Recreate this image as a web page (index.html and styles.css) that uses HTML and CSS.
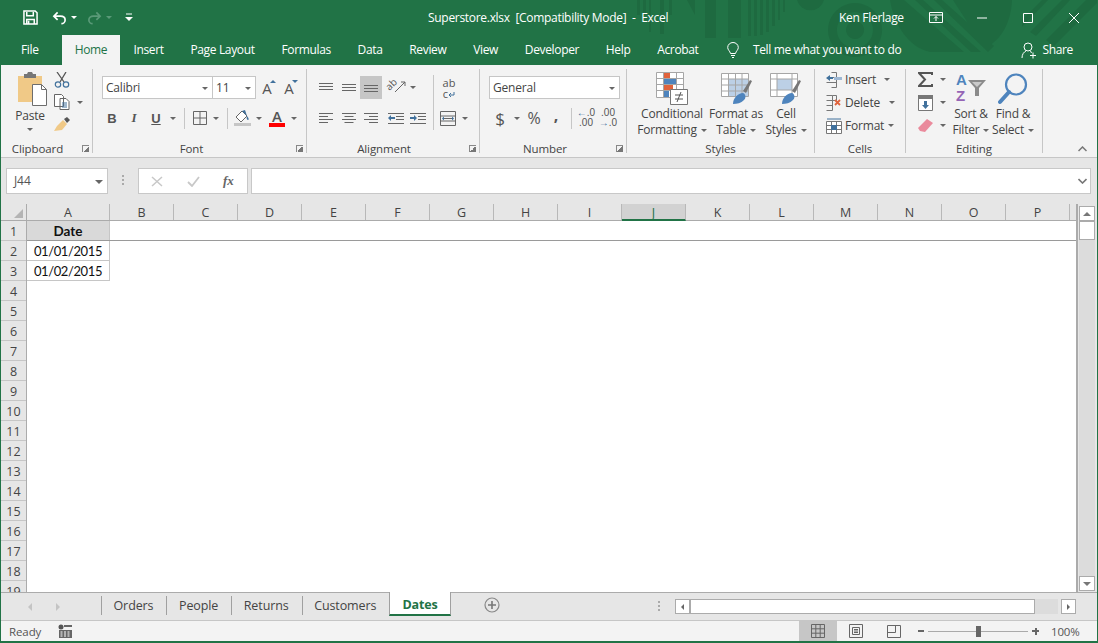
FILE: index.html
```html
<!DOCTYPE html>
<html lang="en">
<head>
    <meta charset="UTF-8">
    <title>Superstore.xlsx - Excel</title>
    <link rel="stylesheet" href="styles.css">
</head>
<body>
<div class="window">

    <svg class="pattern" width="468" height="65" viewBox="630 0 468 65">
        <path d="M637 0h3v15h-3zM643 0h3v15h-3zM649 0h2v32h-2zM660 0h4v34h-4zM669 0h3v15h-3z"/>
        <path d="M687 0h8v15zM705 0h11v38h-11zM728 0h13v38h-13z"/>
        <path d="M748 0h3v36h-3zM754 0h3v36h-3zM760 0h3v35h-3zM766 0h3v32h-3zM772 0h3v26h-3zM778 0h2v20h-2zM783 0h2v12h-2z"/>
        <path d="M797 0h27a14 14 0 0 1-27 0z"/>
        <path fill-rule="evenodd" d="M855 3a27 27 0 1 0 .1 0zM855 12a18 18 0 1 1-.1 0zM855 21a9 9 0 1 0 .1 0z"/>
        <path d="M890 0h14l60 52h-34c-22-5-36-28-40-52zM915 0h8l58 52h-10zM934 0h8l52 46-6 6zM953 0h59c-1 24-12 42-28 48z"/>
        <path d="M1022 20l20-20h6l-26 27zM1030 32l32-32h8l-34 36zM1046 40l40-40h12v2l-44 44z"/>
    </svg>

    <header class="titlebar">
        <div class="qat">
            <svg class="qat-save" width="15" height="15" viewBox="0 0 16 16"><path d="M1 1h12l2 2v12H1zM4 2v4h7V2M4 15v-5h8v5M6 11.500v3" fill="none" stroke="#fff" stroke-width="1.600"/></svg>
            <svg class="qat-undo" width="15" height="14" viewBox="0 0 16 14"><path d="M6 1L2 5l4 4M2 5h7c3 0 5 1.500 5 4s-2 4-4 4" fill="none" stroke="#fff" stroke-width="1.800"/></svg>
            <i class="caret white"></i>
            <svg class="qat-redo" width="15" height="14" viewBox="0 0 16 14"><path d="M10 1l4 4-4 4M14 5H7C4 5 2 6.500 2 9s2 4 4 4" fill="none" stroke="#5a9a78" stroke-width="1.800"/></svg>
            <i class="caret dim"></i>
            <svg class="qat-more" width="8" height="9" viewBox="0 0 8 9"><path d="M1 1h6" stroke="#fff"/><path d="M0 4h8L4 8z" fill="#fff"/></svg>
        </div>
        <div class="doc-title">Superstore.xlsx&nbsp; [Compatibility Mode]&nbsp; -&nbsp; Excel</div>
        <div class="user">Ken Flerlage</div>
        <div class="win-btns">
            <svg width="14" height="11" viewBox="0 0 14 11"><path d="M.5.500h13v10H.5zM1 3h12M7 9V4.500M5 6.500l2-2 2 2" fill="none" stroke="#fff"/></svg>
            <svg class="win-min" width="10" height="10" viewBox="0 0 10 10"><path d="M0 5h10" stroke="#fff"/></svg>
            <svg class="win-max" width="10" height="10" viewBox="0 0 10 10"><path d="M.5.500h9v9h-9z" fill="none" stroke="#fff"/></svg>
            <svg class="win-close" width="10" height="10" viewBox="0 0 10 10"><path d="M0 0l10 10M10 0L0 10" stroke="#fff"/></svg>
        </div>
    </header>

    <nav class="tabs">
        <span class="tab">File</span>
        <span class="tab active">Home</span>
        <span class="tab">Insert</span>
        <span class="tab">Page Layout</span>
        <span class="tab">Formulas</span>
        <span class="tab">Data</span>
        <span class="tab">Review</span>
        <span class="tab">View</span>
        <span class="tab">Developer</span>
        <span class="tab">Help</span>
        <span class="tab">Acrobat</span>
        <svg class="bulb" width="12" height="16" viewBox="0 0 12 16"><path d="M3.500 11.500C3 9 .7 8 .7 5.500a5.300 5 0 0 1 10.600 0c0 2.500-2.300 3.500-2.800 6zM4 13.500h4M5 15.500h2" fill="none" stroke="#fff"/></svg>
        <span class="tell">Tell me what you want to do</span>
        <span class="share">
            <svg width="16" height="17" viewBox="0 0 16 17"><circle cx="7" cy="5" r="4" fill="none" stroke="#fff"/><path d="M1 16c0-4 2-6 4-7M9 9.500l2 1M9 13.500h6M12 10.500v6" fill="none" stroke="#fff"/></svg>
            Share
        </span>
    </nav>

    <section class="ribbon">
        <!-- Clipboard -->
        <div class="group g-clipboard">
            <div class="group-body">
                <div class="big-btn paste">
                    <svg width="30" height="34" viewBox="0 0 30 34">
                        <path d="M1 4h24v26H1z" fill="#f0c987"/>
                        <path d="M7 4V2h3l1-2h4l1 2h3v4H7z" fill="#767676"/>
                        <path d="M15.500 12.500h9l5 5v16h-14z" fill="#fff" stroke="#6d6d6d"/>
                        <path d="M24.500 12.500v5h5" fill="none" stroke="#6d6d6d"/>
                    </svg>
                    <span class="big-text">Paste</span>
                    <i class="caret"></i>
                </div>
                <div class="clip-tools">
                    <div class="tool">
                        <svg width="16" height="16" viewBox="0 0 16 16"><path d="M3 0l7 10M12 0L6 10" stroke="#555" stroke-width="1.300" fill="none"/><circle cx="4" cy="12.500" r="2.700" fill="none" stroke="#41719c" stroke-width="1.200"/><circle cx="12" cy="12.500" r="2.700" fill="none" stroke="#41719c" stroke-width="1.200"/></svg>
                    </div>
                    <div class="tool">
                        <svg width="16" height="16" viewBox="0 0 16 16"><path d="M.5.500h7l2 2v10H.5zM6 4.500h6l3 3v8H6z" fill="#fff" stroke="#666"/><path d="M8 9h5M8 11h5M8 13h5" stroke="#41719c"/></svg>
                        <i class="caret copy-caret"></i>
                    </div>
                    <div class="tool">
                        <svg width="16" height="15" viewBox="0 0 16 15"><path d="M10 2l3-2 3 3-3 3z" fill="#555"/><path d="M9 3l4 4-5 6-8 1 3-5z" fill="#f0c987"/></svg>
                    </div>
                </div>
            </div>
            <div class="group-label">Clipboard<i class="launcher"></i></div>
        </div>

        <!-- Font -->
        <div class="group g-font">
            <div class="group-body col">
                <div class="row row-top">
                    <div class="combo combo-font">Calibri<i class="caret"></i></div>
                    <div class="combo combo-size">11<i class="caret"></i></div>
                    <span class="tool grow-a">A<i class="tiny-up"></i></span>
                    <span class="tool shrink-a">A<i class="tiny-down"></i></span>
                </div>
                <div class="row row-bottom">
                    <span class="tool fmt bold">B</span>
                    <span class="tool fmt ital">I</span>
                    <span class="tool fmt under">U</span>
                    <i class="caret slot"></i>
                    <span class="vsep"></span>
                    <span class="tool w20">
                        <svg width="14" height="14" viewBox="0 0 14 14"><path d="M.5.500h13v13H.5zM7 .5v13M.5 7h13" fill="none" stroke="#666"/></svg>
                    </span>
                    <i class="caret slot"></i>
                    <span class="vsep"></span>
                    <span class="tool w20 fill-tool">
                        <svg width="18" height="16" viewBox="0 0 18 16"><path d="M8 1L2 7l5 5 6-6z" fill="#fff" stroke="#666"/><path d="M8 1l3-1 2 6z" fill="#41719c"/><path d="M13 6c2 2 2 4 1 4s-2-2-1-4z" fill="#41719c"/><path d="M0 13h17v3H0z" fill="#c6c6c6"/></svg>
                    </span>
                    <i class="caret slot"></i>
                    <span class="tool color-a">A<b></b></span>
                    <i class="caret slot"></i>
                </div>
            </div>
            <div class="group-label">Font<i class="launcher"></i></div>
        </div>

        <!-- Alignment -->
        <div class="group g-align">
            <div class="group-body">
                <div class="col align-main">
                    <div class="row row-top">
                        <span class="tool"><svg width="14" height="9" viewBox="0 0 14 9"><path d="M0 .5h14M0 3.500h14M0 6.500h14" stroke="#666"/></svg></span>
                        <span class="tool mid"><svg width="14" height="9" viewBox="0 0 14 9"><path d="M0 1.500h14M0 4.500h14M0 7.500h14" stroke="#666"/></svg></span>
                        <span class="tool on"><svg width="14" height="9" viewBox="0 0 14 9"><path d="M0 2.500h14M0 5.500h14M0 8.500h14" stroke="#666"/></svg></span>
                        <span class="tool orient"><span class="orient-ab">ab</span><svg width="12" height="12" viewBox="0 0 12 12"><path d="M1 11L11 1M7 1h4v4" fill="none" stroke="#666"/></svg></span>
                        <i class="caret slot"></i>
                    </div>
                    <div class="row row-bottom">
                        <span class="tool"><svg width="14" height="10" viewBox="0 0 14 10"><path d="M0 .5h14M0 3.500h9M0 6.500h14M0 9.500h9" stroke="#666"/></svg></span>
                        <span class="tool mid"><svg width="14" height="10" viewBox="0 0 14 10"><path d="M0 .5h14M2.500 3.500h9M0 6.500h14M2.500 9.500h9" stroke="#666"/></svg></span>
                        <span class="tool"><svg width="14" height="10" viewBox="0 0 14 10"><path d="M0 .5h14M5 3.500h9M0 6.500h14M5 9.500h9" stroke="#666"/></svg></span>
                        <span class="tool indent-first"><svg width="16" height="11" viewBox="0 0 16 11"><path d="M0 .5h16M8 3.500h8M8 6.500h8M0 10.500h16" stroke="#666"/><path d="M0 5l3-3v2h4v2H3v2z" fill="#41719c"/></svg></span>
                        <span class="tool"><svg width="16" height="11" viewBox="0 0 16 11"><path d="M0 .5h16M8 3.500h8M8 6.500h8M0 10.500h16" stroke="#666"/><path d="M7 5L4 2v2H0v2h4v2z" fill="#41719c"/></svg></span>
                    </div>
                </div>
                <span class="vsep tall"></span>
                <div class="col">
                    <div class="row row-top">
                        <span class="tool wrap-text">ab<br>c<svg width="7" height="6" viewBox="0 0 7 6"><path d="M6 0v3H1M3 1L1 3l2 2" fill="none" stroke="#41719c"/></svg></span>
                    </div>
                    <div class="row row-bottom">
                        <span class="tool"><svg width="16" height="15" viewBox="0 0 16 15"><path d="M.5.500h15v14H.5zM.5 5h15M.5 10h15M3 7.500h10" fill="none" stroke="#666"/><path d="M2 7.500l2-2v4zM14 7.500l-2-2v4z" fill="#41719c"/></svg></span>
                        <i class="caret slot tight"></i>
                    </div>
                </div>
            </div>
            <div class="group-label">Alignment<i class="launcher"></i></div>
        </div>

        <!-- Number -->
        <div class="group g-number">
            <div class="group-body col">
                <div class="row row-top">
                    <div class="combo combo-num">General<i class="caret"></i></div>
                </div>
                <div class="row row-bottom">
                    <span class="tool sym dollar">$</span>
                    <i class="caret slot"></i>
                    <span class="tool sym">%</span>
                    <span class="tool sym comma">,</span>
                    <span class="vsep num-sep"></span>
                    <span class="tool dec"><em>←</em>.0<br>.00</span>
                    <span class="tool dec">.00<br><em>→</em>.0</span>
                </div>
            </div>
            <div class="group-label">Number<i class="launcher"></i></div>
        </div>

        <!-- Styles -->
        <div class="group g-styles">
            <div class="group-body">
                <div class="big-btn cond">
                    <svg width="32" height="33" viewBox="0 0 32 33">
                        <path d="M.5.500h27v25H.5zM.5 6.500h27M.5 12.500h27M.5 18.500h27M7.500.5v25M20.500.5v25" fill="#fff" stroke="#a6a6a6"/>
                        <path d="M8 1h6v5H8z" fill="#e0633c"/><path d="M8 7h12v5H8z" fill="#4e84bd"/><path d="M8 13h9v5H8z" fill="#e0633c"/><path d="M8 19h5v6H8z" fill="#4e84bd"/>
                        <path d="M14.500 17.500h17v15h-17z" fill="#fff" stroke="#777"/>
                        <path d="M19 23h8M19 27h8M25 20l-4 10" stroke="#555" fill="none"/>
                    </svg>
                    <span class="big-text">Conditional<br>Formatting<i class="caret inline"></i></span>
                </div>
                <div class="big-btn table">
                    <svg width="32" height="33" viewBox="0 0 32 33">
                        <path d="M.5 1.500h27v23H.5z" fill="#fff" stroke="#a6a6a6"/>
                        <path d="M7 7h20v17H7z" fill="#bcd0e6"/>
                        <path d="M.5 7h27M.5 13h27M.5 19h27M7.500 1.500v23M14.500 1.500v23M21 1.500v23" stroke="#a6a6a6" fill="none"/>
                        <path d="M22 19l7-11 2 1-6 12z" fill="#777"/>
                        <path d="M12 32c0-6 5-11 10-11 3 1 3 5 1 7-3 3-7 4-11 4z" fill="#4e84bd"/>
                    </svg>
                    <span class="big-text">Format as<br>Table<i class="caret inline"></i></span>
                </div>
                <div class="big-btn cellst">
                    <svg width="32" height="33" viewBox="0 0 32 33">
                        <path d="M.5 1.500h27v23H.5z" fill="#fff" stroke="#a6a6a6"/>
                        <path d="M7 7h15v11H7z" fill="#bcd0e6"/>
                        <path d="M.5 7h27M.5 18h27M7 1.500v23M22 1.500v23" stroke="#a6a6a6" fill="none"/>
                        <path d="M22 19l7-11 2 1-6 12z" fill="#777"/>
                        <path d="M12 32c0-6 5-11 10-11 3 1 3 5 1 7-3 3-7 4-11 4z" fill="#4e84bd"/>
                    </svg>
                    <span class="big-text">Cell<br>Styles<i class="caret inline"></i></span>
                </div>
            </div>
            <div class="group-label">Styles</div>
        </div>

        <!-- Cells -->
        <div class="group g-cells">
            <div class="group-body col">
                <div class="cell-row">
                    <svg width="16" height="16" viewBox="0 0 16 16"><path d="M5.500.5h5v15h-5M.5 10.500h10M5.500 5.500h5" fill="none" stroke="#777"/><path d="M0 6l4-3v2h3v2H4v2z" fill="#41719c"/><path d="M8 5h8v3H8z" fill="#9db7d3"/></svg>
                    <span>Insert</span><i class="caret c-insert"></i>
                </div>
                <div class="cell-row">
                    <svg width="16" height="16" viewBox="0 0 16 16"><path d="M.5.500h6v15h-6M.5 5.500h10M.5 10.500h6M6.500.5h4v5" fill="none" stroke="#777"/><path d="M9 5l5 5M14 5l-5 5" stroke="#e0633c" stroke-width="1.800"/></svg>
                    <span>Delete</span><i class="caret c-delete"></i>
                </div>
                <div class="cell-row">
                    <svg width="16" height="16" viewBox="0 0 16 16"><path d="M.5 3.500h15v12H.5zM.5 7.500h15M.5 11.500h15M5.500 3.500v12M10.500 3.500v12" fill="#fff" stroke="#777"/><path d="M5 7h6v5H5z" fill="#41719c"/><path d="M1 1h14" stroke="#41719c"/></svg>
                    <span>Format</span><i class="caret c-format"></i>
                </div>
            </div>
            <div class="group-label">Cells</div>
        </div>

        <!-- Editing -->
        <div class="group g-editing">
            <div class="group-body">
                <div class="col edit-tools">
                    <div class="edit-row">
                        <svg width="15" height="15" viewBox="0 0 15 15"><path d="M14 3V1H1l6 6.500L1 14h13v-2" fill="none" stroke="#555" stroke-width="2"/></svg>
                        <i class="caret"></i>
                    </div>
                    <div class="edit-row">
                        <svg width="15" height="16" viewBox="0 0 15 16"><path d="M.5.500h14v15H.5z" fill="#fff" stroke="#777"/><path d="M0 0h15v4H0z" fill="#777"/><path d="M6 6h3v4h2l-3.500 4L4 10h2z" fill="#41719c"/></svg>
                        <i class="caret"></i>
                    </div>
                    <div class="edit-row">
                        <svg width="15" height="13" viewBox="0 0 15 13"><path d="M9 0l6 4-8 9-5-1-2-3z" fill="#ea8a9c"/></svg>
                        <i class="caret"></i>
                    </div>
                </div>
                <div class="big-btn sort">
                    <div class="sort-icon">
                        <span class="az"><em>A</em><b>Z</b></span>
                        <svg width="18" height="16" viewBox="0 0 18 16"><path d="M0 0h18l-7 8v8H7V8z" fill="#8a8a8a"/><path d="M4 2h10l-5 5z" fill="#c9c9c9"/></svg>
                    </div>
                    <span class="big-text">Sort &amp;<br>Filter<i class="caret inline"></i></span>
                </div>
                <div class="big-btn find">
                    <svg width="30" height="32" viewBox="0 0 30 32"><circle cx="18" cy="11.500" r="10" fill="none" stroke="#4e84bd" stroke-width="2.200"/><path d="M11 19L2 29" stroke="#4e84bd" stroke-width="4" stroke-linecap="round"/></svg>
                    <span class="big-text">Find &amp;<br>Select<i class="caret inline"></i></span>
                </div>
            </div>
            <div class="group-label">Editing</div>
        </div>

        <svg class="collapse" width="9" height="6" viewBox="0 0 9 6"><path d="M.5 5l4-4 4 4" fill="none" stroke="#777" stroke-width="1.500"/></svg>
    </section>

    <section class="formula-area">
        <div class="name-box">J44<i class="caret"></i></div>
        <span class="dots"></span>
        <div class="fx-box">
            <svg width="12" height="11" viewBox="0 0 12 11"><path d="M1 1l10 9M11 1L1 10" stroke="#c8c8c8" stroke-width="1.500"/></svg>
            <svg class="fx-check" width="13" height="11" viewBox="0 0 13 11"><path d="M1 6l4 4 7-9" fill="none" stroke="#c8c8c8" stroke-width="1.800"/></svg>
            <span class="fx-label">fx</span>
        </div>
        <div class="formula-input">
            <svg width="9" height="6" viewBox="0 0 9 6"><path d="M.5 1l4 4 4-4" fill="none" stroke="#777" stroke-width="1.600"/></svg>
        </div>
    </section>

    <section class="sheet-wrap">
        <div class="sheet">
            <div class="col-heads">
                <div class="corner"><i></i></div>
                <div class="col-head col-a">A</div>
                <div class="col-head">B</div>
                <div class="col-head">C</div>
                <div class="col-head">D</div>
                <div class="col-head">E</div>
                <div class="col-head">F</div>
                <div class="col-head">G</div>
                <div class="col-head">H</div>
                <div class="col-head">I</div>
                <div class="col-head selected">J</div>
                <div class="col-head">K</div>
                <div class="col-head">L</div>
                <div class="col-head">M</div>
                <div class="col-head">N</div>
                <div class="col-head">O</div>
                <div class="col-head">P</div>
            </div>
            <div class="grid-body">
                <div class="row-heads">
                    <div>1</div><div>2</div><div>3</div><div>4</div><div>5</div>
                    <div>6</div><div>7</div><div>8</div><div>9</div><div>10</div>
                    <div>11</div><div>12</div><div>13</div><div>14</div><div>15</div>
                    <div>16</div><div>17</div><div>18</div><div>19</div>
                </div>
                <div class="cells">
                    <div class="frozen-row">
                        <div class="cell head-cell">Date</div>
                    </div>
                    <div class="cell data-cell">01/01/2015</div>
                    <div class="cell data-cell">01/02/2015</div>
                </div>
            </div>
        </div>
        <div class="vscroll">
            <div class="sb-btn"><i class="arrow-up"></i></div>
            <div class="sb-thumb"></div>
            <div class="sb-track"></div>
            <div class="sb-btn"><i class="arrow-down"></i></div>
        </div>
    </section>

    <section class="sheet-tabs">
        <div class="tab-nav"><i class="arrow-left"></i><i class="arrow-right"></i></div>
        <div class="sheet-tab">Orders</div>
        <div class="sheet-tab">People</div>
        <div class="sheet-tab">Returns</div>
        <div class="sheet-tab">Customers</div>
        <div class="sheet-tab current">Dates</div>
        <svg class="add-sheet" width="16" height="16" viewBox="0 0 16 16"><circle cx="8" cy="8" r="7" fill="none" stroke="#888" stroke-width="1.200"/><path d="M8 4v8M4 8h8" stroke="#777" stroke-width="1.600"/></svg>
        <span class="dots tab-dots"></span>
        <div class="hscroll">
            <div class="hs-btn"><i class="arrow-left dark"></i></div>
            <div class="hs-thumb"></div>
            <div class="hs-track"></div>
            <div class="hs-btn"><i class="arrow-right dark"></i></div>
        </div>
    </section>

    <footer class="status">
        <span class="ready">Ready</span>
        <svg class="macro" width="14" height="14" viewBox="0 0 14 14"><circle cx="3" cy="3" r="2.500" fill="#555"/><path d="M6 1h8v2H6zM1 6h13v8H1z" fill="#666"/><path d="M2.500 8h2M6 8h2M9.500 8h2M2.500 10h2M6 10h2M9.500 10h2M2.500 12h2M6 12h2M9.500 12h2" stroke="#fff"/></svg>
        <div class="view-btn on">
            <svg width="14" height="14" viewBox="0 0 14 14"><path d="M.5.500h13v13H.5zM.5 4.800h13M.5 9.200h13M4.800.5v13M9.200.5v13" fill="none" stroke="#666"/></svg>
        </div>
        <div class="view-btn">
            <svg width="14" height="14" viewBox="0 0 14 14"><path d="M.5.500h13v13H.5zM3.500 3.500h7v7h-7zM5 5.500h4M5 7h4M5 8.500h4" fill="none" stroke="#666"/></svg>
        </div>
        <div class="view-btn">
            <svg width="14" height="13" viewBox="0 0 14 13"><path d="M.5.500h13v12H.5zM.5 7.500h8v-7" fill="none" stroke="#666"/></svg>
        </div>
        <span class="zoom-minus"></span>
        <div class="slider"><i></i></div>
        <span class="zoom-plus"></span>
        <span class="zoom-val">100%</span>
    </footer>
</div>
</body>
</html>
```

FILE: styles.css
```css
* { box-sizing: border-box; }
html, body { margin: 0; padding: 0; }
body { font-family: "Open Sans", "Noto Sans", sans-serif; font-size: 12px; color: #444; overflow: hidden; }
i, em { font-style: normal; }

.window {
    position: relative; width: 1098px; height: 643px; display: flex; flex-direction: column;
    background: #e6e6e6; border: 1px solid #217346; border-top: 0; border-bottom-width: 2px; overflow: hidden;
}
.window::before { content: ""; position: absolute; left: 0; top: 0; width: 100%; height: 65px; background: #217346; }

/* decoration behind the title bar */
.pattern { position: absolute; left: 629px; top: 0; z-index: 0; fill: #1e6a40; }

.caret { display: inline-block; width: 0; height: 0; border: 3px solid transparent; border-top: 3px solid #666; border-bottom: 0; }
.caret.white { border-top-color: #fff; }
.caret.dim { border-top-color: #5a9a78; }
.caret.slot { margin: 0 3px; width: 6px; }
.caret.slot.tight { margin-left: 3px; }
.caret.inline { margin-left: 4px; vertical-align: 2px; }

/* title bar */
.titlebar { position: relative; height: 35px; flex: none; display: flex; align-items: center; color: #fff; z-index: 1; }
.qat { width: 427px; display: flex; align-items: center; padding-left: 22px; }
.qat-undo { margin-left: 14px; }
.qat .caret { margin-left: 4px; }
.qat-redo { margin-left: 10px; }
.qat-more { margin-left: 13px; }
.doc-title { width: 411px; font-size: 12px; letter-spacing: -0.3px; white-space: nowrap; }
.user { width: 90px; white-space: nowrap; letter-spacing: -0.3px; }
.win-btns { display: flex; align-items: center; }
.win-min { margin-left: 34px; }
.win-max { margin-left: 36px; }
.win-close { margin-left: 36px; }

/* ribbon tabs */
.tabs { position: relative; z-index: 1; height: 30px; flex: none; display: flex; align-items: center; color: #fff; letter-spacing: -0.35px; }
.tab { height: 30px; line-height: 29px; padding: 0 13.400px; white-space: nowrap; }
.tab:first-child { width: 61px; padding: 0 0 0 20px; }
.tab.active { width: 58px; padding: 0; text-align: center; background: #f3f3f3; color: #217346; }
.bulb { margin-left: 15px; flex: none; }
.tell { margin-left: 14px; line-height: 28px; white-space: nowrap; }
.share { margin-left: auto; margin-right: 24px; display: flex; align-items: center; gap: 5px; line-height: 28px; }

/* ribbon */
.ribbon { position: relative; height: 93px; flex: none; display: flex; background: #f3f3f3; padding: 4px 0 0; border-bottom: 1px solid #c6c6c6; color: #444; }
.group { position: relative; display: flex; flex-direction: column; height: 84px; border-right: 1px solid #c6c6c6; flex: none; }
.group-body { display: flex; flex: none; height: 73px; }
.group-label { position: relative; height: 11px; line-height: 14px; text-align: center; font-size: 11.500px; letter-spacing: -0.1px; color: #444; }
.launcher { position: absolute; right: 3px; top: 3px; width: 7px; height: 7px; border-left: 1px solid #888; border-top: 1px solid #888; background: linear-gradient(135deg, transparent 50%, #777 50%); }
.g-clipboard .group-label { padding-right: 18px; }
.g-font .group-label { padding-right: 16px; }
.g-align .group-label { padding-right: 18px; }
.g-number .group-label { padding-right: 16px; }
.col { display: flex; flex-direction: column; }
.row { display: flex; align-items: center; }
.row-top { height: 23px; margin-top: 7px; }
.row-bottom { height: 22px; margin-top: 8px; }

.g-clipboard { width: 92px; }
.g-font { width: 214px; }
.g-align { width: 173px; }
.g-number { width: 147px; }
.g-styles { width: 188px; }
.g-cells { width: 91px; }
.g-editing { width: 137px; }

.tool { width: 22px; height: 22px; display: inline-flex; align-items: center; justify-content: center; flex: none; position: relative; }
.tool.w20 { width: 20px; }
.big-btn { display: flex; flex-direction: column; align-items: center; flex: none; }
.big-text { line-height: 16px; text-align: center; white-space: nowrap; letter-spacing: -0.2px; }

.paste { width: 42px; margin-left: 8px; padding-top: 3px; }
.paste svg { margin-left: 3px; }
.paste .big-text { margin-top: 2px; }
.paste .caret { margin-top: 4px; }
.clip-tools { margin: -1px 0 0 0; display: flex; flex-direction: column; }
.clip-tools .tool { width: 22px; height: 22px; position: relative; margin-top: 0.500px; }
.copy-caret { position: absolute; left: 26px; top: 10px; }

.combo { position: relative; height: 23px; background: #fff; border: 1px solid #c6c6c6; line-height: 21px; padding-left: 3px; letter-spacing: -0.2px; color: #444; }
.combo .caret { position: absolute; right: 4px; top: 10px; }
.g-font .group-body { padding-left: 9px; }
.combo-font { width: 111px; }
.combo-size { width: 43px; border-left: 0; }
.grow-a, .shrink-a { font-size: 15px; color: #555; }
.tiny-up, .tiny-down { position: absolute; right: 2px; top: 3px; border: 3px solid transparent; }
.tiny-up { border-bottom: 3px solid #41719c; border-top: 0; }
.tiny-down { border-top: 3px solid #41719c; border-bottom: 0; }
.g-font .row-bottom { margin-left: -1px; }
.fmt { font-family: "Liberation Serif", serif; font-size: 13px; color: #555; }
.fmt.bold { font-family: "Liberation Sans", sans-serif; font-weight: bold; }
.fmt.ital { font-style: italic; font-weight: bold; }
.fmt.under { font-family: "Liberation Sans", sans-serif; font-weight: bold; text-decoration: underline; }
.vsep { width: 1px; height: 21px; margin: 0 5px; background: #c6c6c6; flex: none; }
.color-a { margin-left: 1px; font-size: 15px; font-weight: 600; color: #555; line-height: 13px; padding-bottom: 4px; }
.color-a b { position: absolute; left: 3px; bottom: 2px; width: 16px; height: 4px; background: #f00; }

.g-align .group-body { padding-left: 8px; }
.align-main { width: 110px; }
.mid { margin-left: 1px; }
.on { background: #c6c6c6; height: 23px; }
.orient { margin-left: 3px; }
.orient-ab { position: absolute; left: 0; top: 2px; font-size: 10px; line-height: 10px; transform: rotate(-45deg); color: #555; }
.orient svg { margin: 0 0 2px 8px; }
.indent-first { margin-left: 3px; }
.vsep.tall { height: 55px; margin: 6px 3px 0 8px; }
.wrap-text { display: block; width: 24px; height: auto; font-size: 11px; line-height: 11px; text-align: center; color: #555; padding-top: 1px; }

.g-number .group-body { padding-left: 9px; }
.combo-num { width: 131px; }
.sym { font-size: 16px; color: #555; }
.dollar { font-size: 17px; }
.comma { font-weight: bold; padding-bottom: 6px; }
.vsep.num-sep { margin: 0 3px 0 4px; }
.dec { display: block; font-size: 10px; line-height: 10px; text-align: center; font-family: "Liberation Sans", sans-serif; color: #555; padding-top: 1px; }
.dec em { color: #41719c; }

.g-styles .group-body { padding-left: 10px; }
.big-btn svg { flex: none; }
.cond { width: 70px; padding-top: 3px; }
.cond .big-text, .table .big-text, .cellst .big-text { margin-top: 1px; }
.table { width: 58px; padding-top: 3px; }
.cellst { width: 42px; padding-top: 3px; }
.table svg { margin-left: 2px; }

.g-cells .group-body { padding: 0 0 0 11px; margin-top: -1px; margin-bottom: 1px; }
.cell-row { position: relative; height: 23px; display: flex; align-items: center; gap: 3px; letter-spacing: -0.2px; }
.c-insert { margin-left: 5px; }
.c-delete { margin-left: 6px; }
.c-format { margin-left: 1px; }

.g-editing .group-body { padding-left: 12px; margin-top: -1px; margin-bottom: 1px; }
.edit-tools { width: 31px; }
.edit-row { height: 23px; display: flex; align-items: center; gap: 6px; }
.edit-row .caret { margin-left: 1px; }
.sort { width: 44px; padding-top: 4px; }
.sort-icon { display: flex; align-items: flex-start; height: 34px; font-family: "Liberation Sans", sans-serif; font-size: 15px; font-weight: bold; }
.sort-icon svg { margin-top: 8px; margin-left: 1px; }
.az { display: flex; flex-direction: column; line-height: 16px; }
.az em { color: #4e84bd; }
.az b { color: #9564b5; }
.find { width: 40px; padding-top: 4px; }
.find svg { height: 34px; }
.collapse { position: absolute; left: 1077px; top: 81px; }

/* formula bar */
.formula-area { height: 46px; flex: none; display: flex; align-items: flex-start; padding: 10px 0 0 5px; background: #e6e6e6; }
.name-box { position: relative; width: 102px; height: 26px; background: #fff; border: 1px solid #c8c8c8; line-height: 24px; padding-left: 7px; color: #555; letter-spacing: -0.1px; }
.name-box .caret { position: absolute; right: 4px; top: 11px; border-width: 4px; border-bottom: 0; }
.dots { width: 2px; height: 11px; margin: 7px 14px 0 14px; background: repeating-linear-gradient(#aaa 0 2px, transparent 2px 4px); flex: none; }
.fx-box { width: 110px; height: 26px; background: #fff; border: 1px solid #c8c8c8; display: flex; align-items: center; padding-left: 12px; }
.fx-check { margin-left: 24px; }
.fx-label { margin-left: 23px; font-family: "Liberation Serif", serif; font-style: italic; font-weight: bold; color: #666; font-size: 13px; }
.formula-input { width: 840px; height: 26px; margin-left: 3px; background: #fff; border: 1px solid #c8c8c8; display: flex; align-items: center; justify-content: flex-end; padding-right: 3px; }

/* sheet */
.sheet-wrap { flex: none; display: flex; height: 388px; }
.sheet { width: 1077px; flex: none; overflow: hidden; border-right: 2px solid #ababab; }
.col-heads { display: flex; height: 17px; border-bottom: 1px solid #ababab; }
.corner { width: 26px; position: relative; border-right: 1px solid #ababab; flex: none; }
.corner i { position: absolute; right: 3px; bottom: 2px; border: 0 solid transparent; border-width: 0 0 9px 9px; border-bottom-color: #b4b4b4; }
.col-head { width: 64px; flex: none; text-align: center; line-height: 17px; font-size: 12.500px; color: #444; border-right: 1px solid #b8b8b8; }
.col-a { width: 83px; }
.col-head.selected { background: #d2d2d2; border-bottom: 2px solid #217346; height: 17px; color: #217346; }
.grid-body { display: flex; background: #fff; height: 371px; }
.row-heads { width: 26px; flex: none; background: #e6e6e6; border-right: 1px solid #ababab; }
.row-heads div { height: 20px; line-height: 21px; text-align: center; border-bottom: 1px solid #c6c6c6; color: #444; font-size: 12.500px; }
.cells { flex: 1; display: flex; flex-direction: column; }
.frozen-row { height: 20px; border-bottom: 1px solid #9a9a9a; }
.cell { width: 83px; height: 20px; line-height: 21px; text-align: center; font-family: "Lato", sans-serif; font-size: 13px; letter-spacing: -0.4px; color: #111; border-right: 1px solid #c6c6c6; border-bottom: 1px solid #c6c6c6; }
.head-cell { background: #d9d9d9; font-weight: bold; font-size: 13.500px; letter-spacing: 0; height: 19px; border-bottom: 0; }

.vscroll { width: 20px; height: 388px; flex: none; display: flex; flex-direction: column; padding: 2px 3px 1px 1px; }
.sb-btn { height: 15px; flex: none; background: #fff; border: 1px solid #ababab; display: flex; align-items: center; justify-content: center; }
.sb-thumb { height: 19px; background: #fff; border: 1px solid #ababab; flex: none; }
.sb-track { flex: 1; background: #dcdcdc; }
.arrow-up { border: 4px solid transparent; border-top: 0; border-bottom: 4px solid #777; }
.arrow-down { border: 4px solid transparent; border-bottom: 0; border-top: 4px solid #777; }
.arrow-left { border: 4px solid transparent; border-left: 0; border-right: 4px solid #c4c4c4; }
.arrow-right { border: 4px solid transparent; border-right: 0; border-left: 4px solid #c4c4c4; }
.arrow-left.dark { border-right-color: #666; }
.arrow-right.dark { border-left-color: #666; }

/* sheet tabs */
.sheet-tabs { height: 29px; flex: none; display: flex; align-items: flex-start; border-top: 1px solid #ababab; border-bottom: 1px solid #c6c6c6; background: #e6e6e6; }
.tab-nav { width: 100px; height: 27px; display: flex; align-items: center; padding-left: 27px; gap: 24px; }
.sheet-tab { height: 19px; margin-top: 3px; line-height: 19px; padding: 0 13px 0 11.500px; border-left: 1px solid #a0a0a0; color: #444; font-size: 12.500px; letter-spacing: -0.1px; }
.sheet-tab.current { height: 24px; margin-top: -1px; line-height: 25px; padding: 0 12px; background: #fff; color: #217346; font-weight: bold; border-bottom: 2px solid #217346; border-right: 1px solid #a0a0a0; }
.add-sheet { margin: 4px 0 0 33px; flex: none; }
.tab-dots { margin: 8px 0 0 158px; }
.hscroll { display: flex; height: 15px; width: 401px; margin: 6px 0 0 15px; flex: none; }
.hs-btn { width: 15px; background: #fff; border: 1px solid #ababab; display: flex; align-items: center; justify-content: center; flex: none; }
.hs-btn i { border-width: 3.500px; }
.hs-thumb { width: 345px; background: #fff; border: 1px solid #ababab; flex: none; }
.hs-track { width: 23px; margin-right: 3px; background: #dcdcdc; flex: none; }

/* status bar */
.status { height: 20px; flex: none; display: flex; align-items: center; background: #f3f3f3; position: relative; color: #555; font-size: 11.500px; }
.ready { margin-left: 8px; width: 49px; letter-spacing: -0.1px; }
.macro { flex: none; }
.view-btn { width: 38px; height: 20px; display: flex; align-items: center; justify-content: center; flex: none; }
.view-btn.on { background: #c6c6c6; margin-left: 727px; }
.zoom-minus { width: 6px; height: 2px; background: #666; margin-left: 5px; flex: none; }
.slider { position: relative; width: 100px; height: 1px; background: #aaa; margin-left: 4px; flex: none; }
.slider i { position: absolute; left: 48px; top: -5px; width: 5px; height: 11px; background: #666; }
.zoom-plus { position: relative; width: 7px; height: 2px; background: #666; margin-left: 4px; flex: none; }
.zoom-plus::after { content: ""; position: absolute; left: 2.500px; top: -2.500px; width: 2px; height: 7px; background: #666; }
.zoom-val { margin-left: 12px; letter-spacing: -0.2px; }
```
